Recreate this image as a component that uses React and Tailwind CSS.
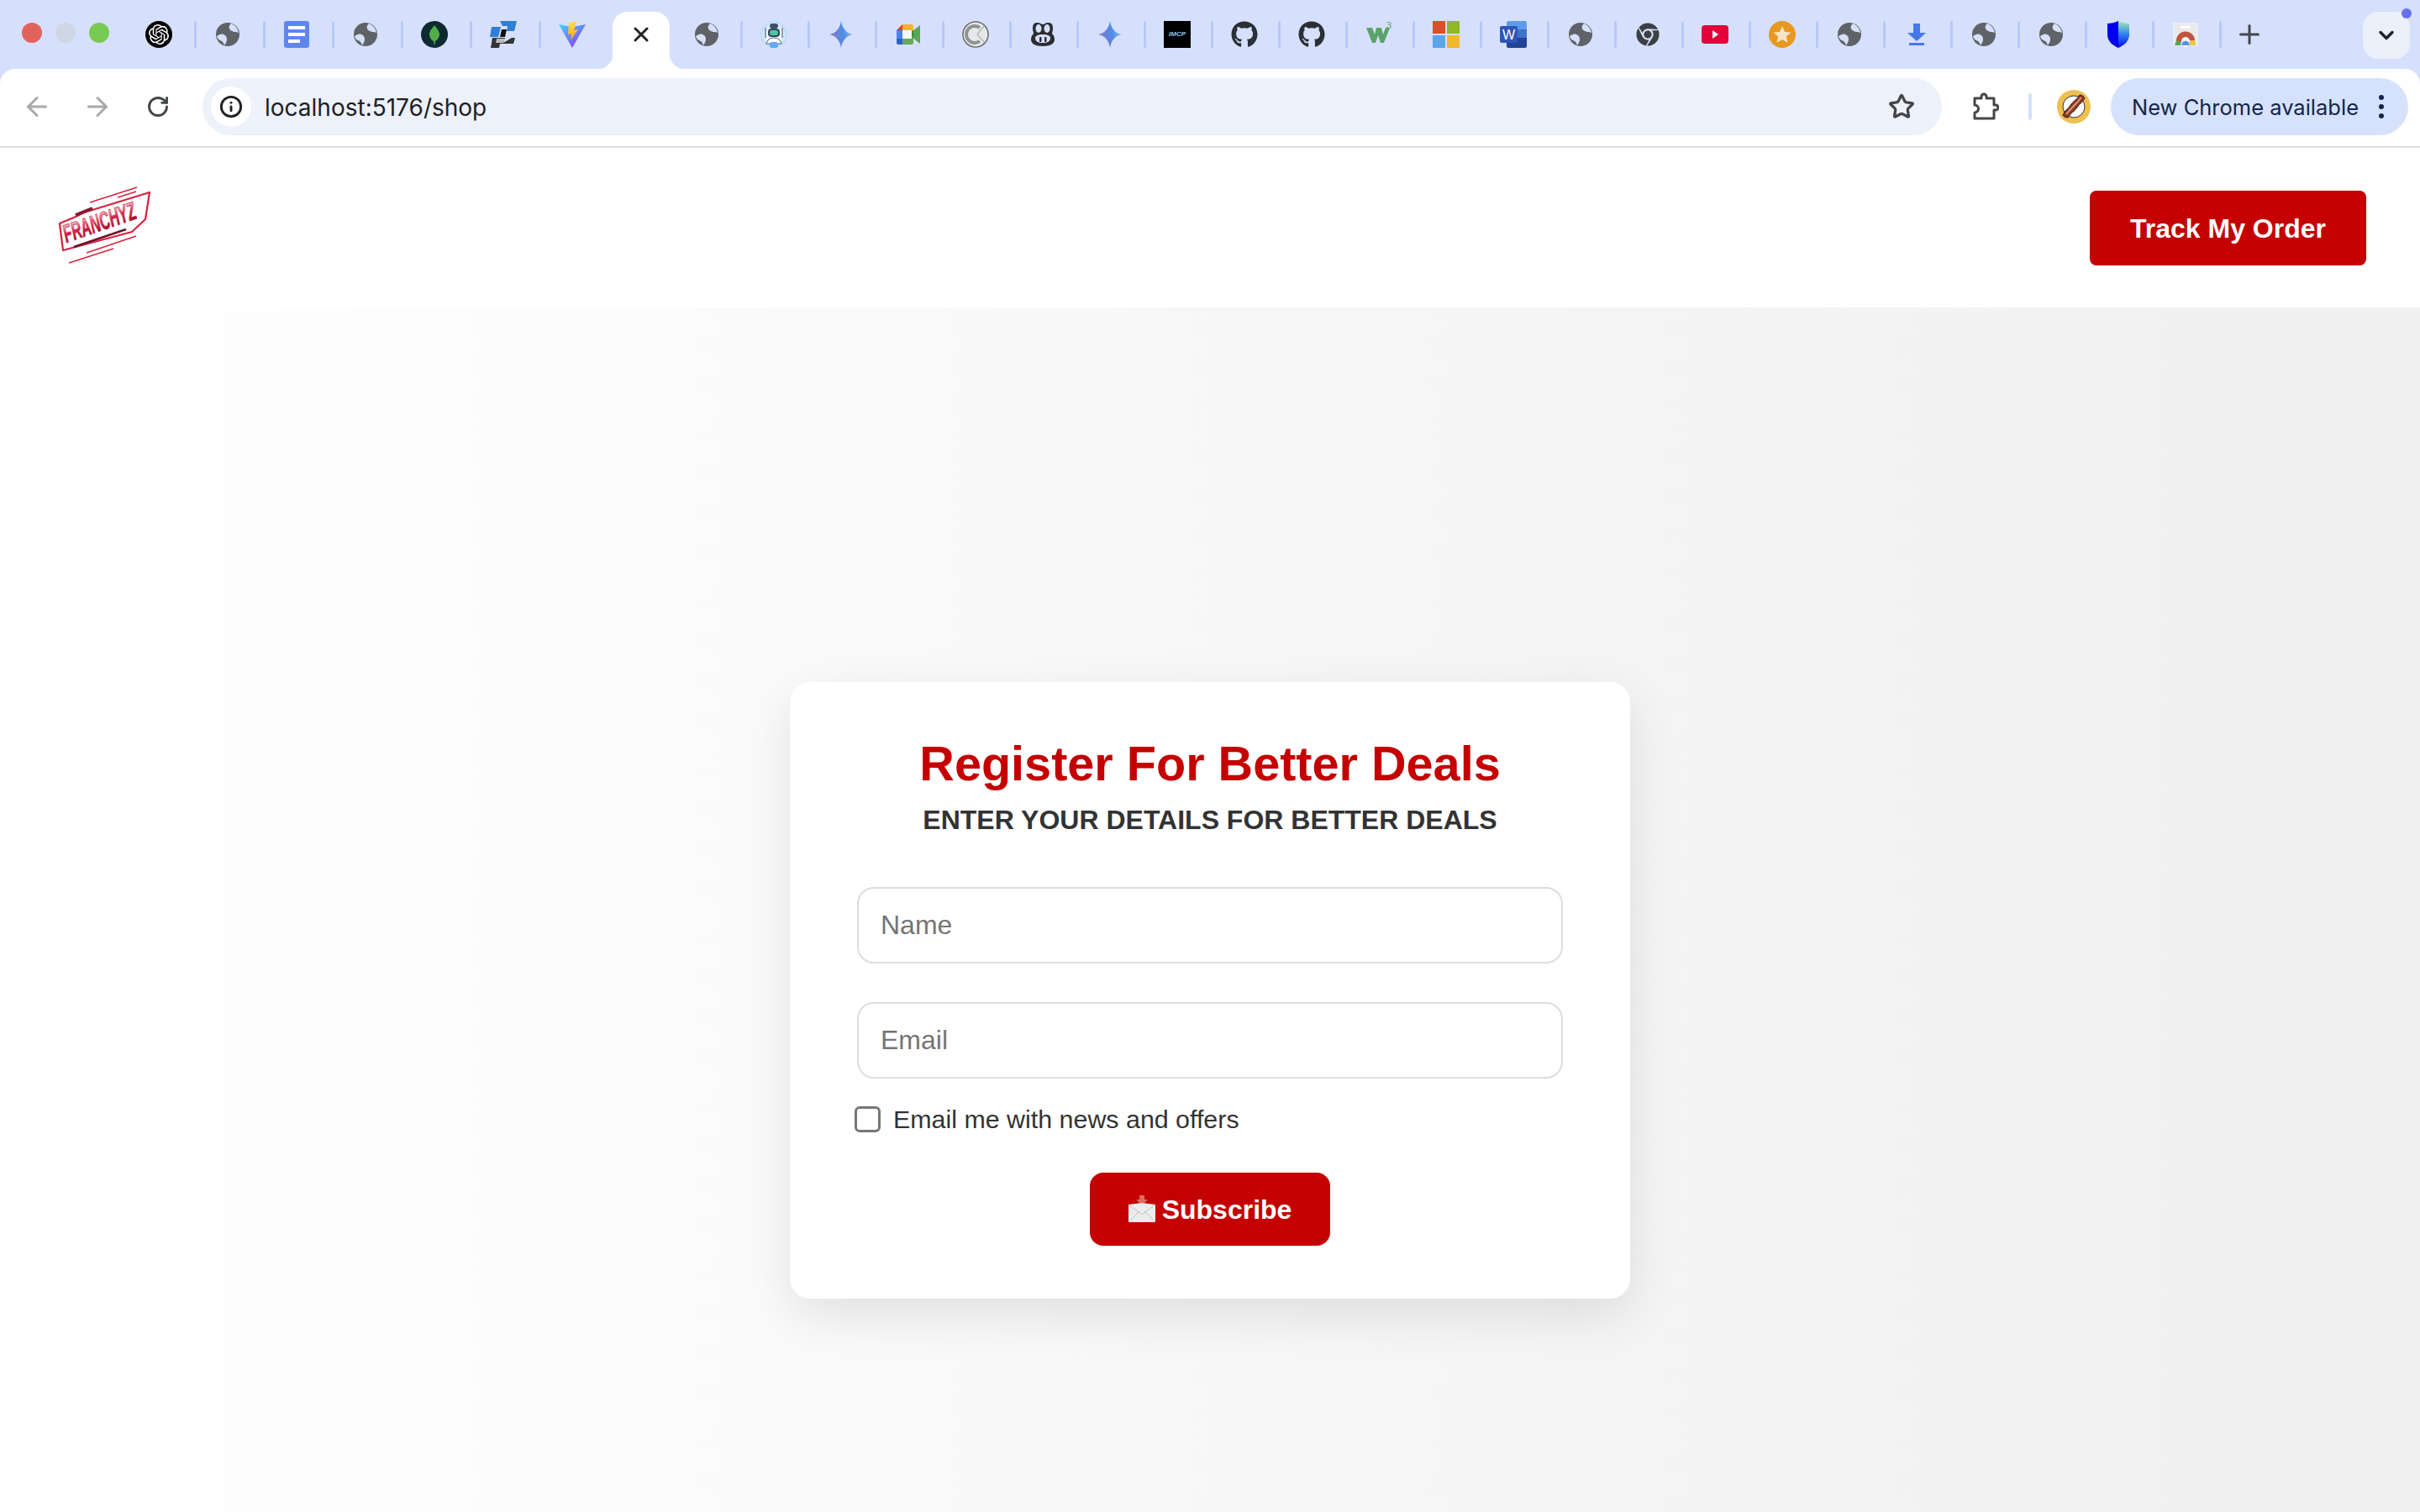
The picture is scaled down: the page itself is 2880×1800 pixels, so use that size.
import React from 'react';
import { FaGithub, FaChrome } from 'react-icons/fa';
import { SiOpenai } from 'react-icons/si';
import { ArrowLeft, ArrowRight, RotateCw, Star, Plus, ChevronDown, X, Info } from 'lucide-react';

// Tab favicons, 32px box each
const Globe = () => (
  <svg viewBox="0 0 32 32" className="w-8 h-8">
    <circle cx="16" cy="16" r="14" fill="#5f6368" />
    <path d="M3 18c3-2 6-3 8-2 3 1 4 3 4 6 0 3-2 5-3 7-1-2-1-4-3-5-2-1-5-2-6-6z" fill="#d6e0fc" />
    <path d="M20 3c-2 2-3 4-2 6 1 3 4 3 6 4 2 0 3 0 5 1-1-5-4-9-9-11z" fill="#d6e0fc" />
  </svg>
);

const Docs = () => (
  <svg viewBox="0 0 32 32" className="w-8 h-8">
    <rect x="1" width="30" height="32" rx="3" fill="#5e86ee" />
    <rect x="6" y="6" width="20" height="4" fill="#fff" />
    <rect x="6" y="14" width="20" height="4" fill="#fff" />
    <rect x="6" y="22" width="14" height="4" fill="#fff" />
  </svg>
);

const Mongo = () => (
  <svg viewBox="0 0 32 32" className="w-8 h-8">
    <circle cx="16" cy="16" r="16" fill="#0e2a30" />
    <path d="M16 5c3 4 6 7 6 11 0 4-3 7-5 8l-.5 4h-1l-.5-4c-2-1-5-4-5-8 0-4 3-7 6-11z" fill="#4fae45" />
  </svg>
);

const BlockLogo = () => (
  <svg viewBox="0 0 32 32" className="w-8 h-8">
    <path d="M12 0h20l-3 12H20l1-6h-6zM2 7h11l-3 12H0z" fill="#2f7fd6" />
    <path d="M14 10h6l-2 9h-6z" fill="#111" />
    <path d="M3 20h15l-2 6 10-6h4l-2 7H12l-1 5H1z" fill="#333" />
    <path d="M8 21h10l-2 5H7z" fill="#bbb" />
  </svg>
);

const Vite = () => (
  <svg viewBox="0 0 32 32" className="w-8 h-8">
    <defs>
      <linearGradient id="viteA" x1="0" y1="0" x2="0.8" y2="1">
        <stop offset="0" stopColor="#41d1ff" />
        <stop offset="1" stopColor="#8c3cf5" />
      </linearGradient>
      <linearGradient id="viteB" x1="0" y1="0" x2="0" y2="1">
        <stop offset="0" stopColor="#ffe14f" />
        <stop offset="1" stopColor="#ffa11e" />
      </linearGradient>
    </defs>
    <path d="M0 4l16 3 16-3-16 28z" fill="url(#viteA)" />
    <path d="M22 0l-10 2-1 14 4-1-1 8 9-13-5 1 4-11z" fill="url(#viteB)" />
  </svg>
);

const Robot = () => (
  <svg viewBox="0 0 32 32" className="w-8 h-8">
    <defs>
      <radialGradient id="robotBg">
        <stop offset="0.5" stopColor="#f2f8fe" />
        <stop offset="1" stopColor="#b9d8f8" />
      </radialGradient>
    </defs>
    <circle cx="16" cy="16" r="16" fill="url(#robotBg)" />
    <rect x="11" y="3" width="10" height="6" rx="3" fill="#3f4f66" />
    <rect x="9" y="9" width="14" height="10" rx="4" fill="#38495e" />
    <rect x="11" y="11" width="10" height="6" rx="3" fill="#49c9a5" />
    <path d="M6 8v12M26 8v12" stroke="#5a6a80" strokeWidth="1.200" />
    <path d="M7 27c1-4 4-7 9-7s8 3 9 7z" fill="#fdfdfd" stroke="#4a5a70" strokeWidth="1" />
    <rect x="11" y="25" width="10" height="7" rx="3" fill="#62a8f2" />
  </svg>
);

const Gemini = ({ id }) => (
  <svg viewBox="0 0 32 32" className="w-8 h-8">
    <defs>
      <linearGradient id={id} x1="0" y1="0.6" x2="1" y2="0.4">
        <stop offset="0" stopColor="#8f6fc4" />
        <stop offset="0.6" stopColor="#4c8fe6" />
        <stop offset="1" stopColor="#8fc2f5" />
      </linearGradient>
    </defs>
    <path d="M16 0c1.2 8.5 6.5 14.8 14 16-7.500 1.200-12.800 7.500-14 16-1.200-8.500-6.500-14.800-14-16C9.500 14.800 14.800 8.500 16 0z" fill={`url(#${id})`} />
  </svg>
);

const Meet = () => (
  <svg viewBox="0 0 32 32" className="w-8 h-8">
    <path d="M21 12l9-7v22l-9-7z" fill="#5aa655" />
    <path d="M2 11l7-7v7z" fill="#d93f33" />
    <path d="M9 4h11c1 0 2 1 2 2v6l-2 2v-3H9z" fill="#f2b824" />
    <path d="M2 11h7v10H2z" fill="#4a82ec" />
    <path d="M2 21h7v7H4c-1 0-2-1-2-2z" fill="#2f62c9" />
    <path d="M9 21h11v-3l2 2v6c0 1-1 2-2 2H9z" fill="#64ab58" />
    <path d="M20 11h1l1 1v8l-2-2z" fill="#3d8a42" />
    <rect x="9" y="11" width="11" height="10" fill="#f4f6fb" />
  </svg>
);

const ClockC = () => (
  <svg viewBox="0 0 32 32" className="w-8 h-8">
    <circle cx="16" cy="16" r="15" fill="#e6e8ea" stroke="#6e6e6e" strokeWidth="1.500" />
    <path d="M21 8a10 10 0 1 0 0 16" fill="none" stroke="#8f9290" strokeWidth="4" />
    <path d="M26 6L18 16l8 9" fill="none" stroke="#b4b6b4" strokeWidth="1.500" />
  </svg>
);

const Copilot = () => (
  <svg viewBox="0 0 32 32" className="w-8 h-8">
    <path d="M9 2c4 0 5 2 7 2s3-2 7-2 5 3 5 7c0 3-1 4-1 6 2 2 3 4 3 7 0 5-5 8-14 8S2 27 2 22c0-3 1-5 3-7 0-2-1-3-1-6 0-4 1-7 5-7z" fill="#2b2d31" />
    <ellipse cx="11" cy="9" rx="3.500" ry="5" fill="#d6e0fc" />
    <ellipse cx="21" cy="9" rx="3.500" ry="5" fill="#d6e0fc" />
    <path d="M7 20c0-2 3-4 9-4s9 2 9 4c0 4-3 6-9 6s-9-2-9-6z" fill="#d6e0fc" />
    <rect x="12" y="19" width="2.500" height="6" rx="1" fill="#2b2d31" />
    <rect x="18" y="19" width="2.500" height="6" rx="1" fill="#2b2d31" />
  </svg>
);

const McpBox = () => (
  <div className="w-8 h-8 bg-black flex items-center justify-center">
    <span className="text-[8px] font-bold italic text-[#8fc5f0] leading-none">IMCP</span>
  </div>
);

const W3 = () => (
  <svg viewBox="0 0 32 32" className="w-8 h-8">
    <path d="M1 8h7l3 8 2-8h6l2 8 3-8h5l-7 18h-4l-3-9-3 9h-4z" fill="#5ba36c" />
    <text x="25" y="9" fontSize="11" fill="#5ba36c" fontFamily="Liberation Sans, sans-serif">3</text>
  </svg>
);

const Microsoft = () => (
  <div className="w-8 h-8 grid grid-cols-2 grid-rows-2 gap-[2px]">
    <div className="bg-[#d84f2a]"></div>
    <div className="bg-[#8fb827]"></div>
    <div className="bg-[#5aa6ee]"></div>
    <div className="bg-[#f0b92b]"></div>
  </div>
);

const Word = () => (
  <svg viewBox="0 0 32 32" className="w-8 h-8">
    <path d="M8 2c0-1 1-2 2-2h20c1 0 2 1 2 2v8H8z" fill="#5e9bec" />
    <rect x="8" y="10" width="24" height="10" fill="#3f73c9" />
    <path d="M8 20h24v10c0 1-1 2-2 2H10c-1 0-2-1-2-2z" fill="#234394" />
    <rect x="0" y="6" width="21" height="20" rx="2" fill="#2f55b5" />
    <text x="10.500" y="22" textAnchor="middle" fontSize="16" fill="#fff" fontFamily="Liberation Sans, sans-serif">W</text>
  </svg>
);

const YouTube = () => (
  <svg viewBox="0 0 32 32" className="w-8 h-8">
    <rect x="0" y="5" width="32" height="22" rx="4" fill="#e4003a" />
    <path d="M13 11l7 5-7 5z" fill="#fff" />
  </svg>
);

const OrangeStar = () => (
  <svg viewBox="0 0 32 32" className="w-8 h-8">
    <circle cx="16" cy="16" r="16" fill="#e8981f" />
    <path d="M16 6l3 7 7.500.6-5.700 4.900 1.800 7.300L16 22l-6.600 3.800 1.800-7.300L5.500 13.600 13 13z" fill="#f6e6c8" />
  </svg>
);

const DownloadArrow = () => (
  <svg viewBox="0 0 32 32" className="w-8 h-8">
    <path d="M12 4h8v11h7L16 25 5 15h7z" fill="#4477e8" transform="translate(0 -1)" />
    <rect x="7" y="26" width="18" height="3" fill="#4477e8" />
  </svg>
);

const Shield = () => (
  <svg viewBox="0 0 32 32" className="w-8 h-8">
    <defs>
      <linearGradient id="shieldFill" x1="0" y1="0" x2="0" y2="1">
        <stop offset="0" stopColor="#9ff0b0" />
        <stop offset="0.5" stopColor="#2f80f0" />
        <stop offset="1" stopColor="#0808f0" />
      </linearGradient>
    </defs>
    <path d="M16 0c-4 2-9 3-13 3v13c0 8 6 13 13 16z" fill="#0000f0" />
    <path d="M16 0c4 2 9 3 13 3v13c0 8-6 13-13 16z" fill="url(#shieldFill)" />
  </svg>
);

const WebStore = () => (
  <svg viewBox="0 0 32 32" className="w-8 h-8">
    <rect x="2" y="3" width="28" height="26" fill="#e9e9e9" stroke="#f6f6f6" />
    <rect x="10" y="6" width="12" height="3" rx="1" fill="#fff" />
    <path d="M5 24a11 11 0 0 1 22-1l-6 0a5 5 0 0 0-10 2z" fill="#c25340" />
    <path d="M27 23a11 11 0 0 1 1 6h-8l1-6z" fill="#eec53e" />
    <path d="M5 23l6 2-1 4H3z" fill="#55a85a" />
    <circle cx="16" cy="26" r="5" fill="#fff" />
    <path d="M11.500 29a4.600 4.600 0 1 1 9 0z" fill="#5a8fe8" />
  </svg>
);

const Tab = ({ children, wide = false }) => (
  <div className="flex items-center flex-none">
    <div className="w-8 h-8 flex items-center justify-center flex-none">{children}</div>
    <div className={wide ? 'ml-[26px] w-[3px] h-8 rounded bg-[#b5c9fa]' : 'ml-[24px] w-[3px] h-8 rounded bg-[#b5c9fa]'}></div>
    <div className="w-[21px]"></div>
  </div>
);

const TabBar = () => (
  <div className="h-[82px] bg-[#d6e0fc] flex items-center relative flex-none">
    <div className="flex items-center gap-4 pl-[26px] pr-[22px] pb-1">
      <div className="w-6 h-6 rounded-full bg-[#e2635c]"></div>
      <div className="w-6 h-6 rounded-full bg-[#cfd6e4]"></div>
      <div className="w-6 h-6 rounded-full bg-[#77cb52]"></div>
    </div>
    <div className="flex items-center ml-[21px]">
      <Tab wide><div className="w-8 h-8 rounded-full bg-black flex items-center justify-center"><SiOpenai className="w-6 h-6 text-white" /></div></Tab>
      <Tab wide><Globe /></Tab>
      <Tab wide><Docs /></Tab>
      <Tab wide><Globe /></Tab>
      <Tab wide><Mongo /></Tab>
      <Tab wide><BlockLogo /></Tab>
      <div className="w-8 h-8 flex-none"><Vite /></div>
      {/* active tab, flared into the toolbar below */}
      <div className="relative ml-[32px] mr-[28px] w-[68px] h-[68px] mt-[14px] bg-white rounded-t-[18px] flex items-center justify-center flex-none">
        <X className="w-7 h-7 text-[#202124] mb-[14px]" strokeWidth={2.500} />
        <div className="absolute left-[-18px] bottom-0 w-[18px] h-[18px] bg-[radial-gradient(circle_at_0_0,#d6e0fc_18px,#ffffff_18.500px)]"></div>
        <div className="absolute right-[-18px] bottom-0 w-[18px] h-[18px] bg-[radial-gradient(circle_at_100%_0,#d6e0fc_18px,#ffffff_18.500px)]"></div>
      </div>
      <Tab><Globe /></Tab>
      <Tab><Robot /></Tab>
      <Tab><Gemini id="gemA" /></Tab>
      <Tab><Meet /></Tab>
      <Tab><ClockC /></Tab>
      <Tab><Copilot /></Tab>
      <Tab><Gemini id="gemB" /></Tab>
      <Tab><McpBox /></Tab>
      <Tab><FaGithub className="w-8 h-8 text-[#2b2f36]" /></Tab>
      <Tab><FaGithub className="w-8 h-8 text-[#2b2f36]" /></Tab>
      <Tab><W3 /></Tab>
      <Tab><Microsoft /></Tab>
      <Tab><Word /></Tab>
      <Tab><Globe /></Tab>
      <Tab><FaChrome className="w-7 h-7 text-[#3c4043]" /></Tab>
      <Tab><YouTube /></Tab>
      <Tab><OrangeStar /></Tab>
      <Tab><Globe /></Tab>
      <Tab><DownloadArrow /></Tab>
      <Tab><Globe /></Tab>
      <Tab><Globe /></Tab>
      <Tab><Shield /></Tab>
      <Tab><WebStore /></Tab>
      <Plus className="w-9 h-9 -ml-[6px] text-[#44474e] flex-none" strokeWidth={2} />
    </div>
    <div className="absolute right-3 top-[14px] w-14 h-14 rounded-[18px] bg-[#ebf0fb] flex items-center justify-center">
      <ChevronDown className="w-7 h-7 text-[#202124]" strokeWidth={3} />
      <div className="absolute right-[-2px] top-[-4px] w-3 h-3 rounded-full bg-[#6470ee]"></div>
    </div>
  </div>
);

const Toolbar = () => (
  <div className="h-[94px] flex-none bg-[#d6e0fc]">
    <div className="h-full bg-white rounded-t-[18px] border-b-2 border-[#dfdfdf] flex items-center pl-[26px] pb-[2px] font-['Inter',sans-serif]">
      <ArrowLeft className="w-9 h-9 text-[#a9a9a9] flex-none" strokeWidth={2} />
      <ArrowRight className="w-9 h-9 text-[#a9a9a9] flex-none ml-9" strokeWidth={2} />
      <RotateCw className="w-7 h-7 text-[#444746] flex-none ml-10" strokeWidth={2.500} />
      <div className="ml-[39px] w-[2070px] h-[68px] flex-none rounded-full bg-[#edf1fa] flex items-center pl-[10px] pr-[32px]">
        <div className="w-12 h-12 rounded-full bg-white flex items-center justify-center flex-none">
          <Info className="w-7 h-7 text-[#202124]" strokeWidth={2.500} />
        </div>
        <span className="ml-4 text-[28px] text-[#202124] leading-none mt-[2px]">localhost:5176/shop</span>
        <Star className="w-8 h-8 text-[#444746] ml-auto" strokeWidth={2.500} />
      </div>
      {/* extensions puzzle piece */}
      <svg viewBox="0 0 32 34" className="w-8 h-[34px] flex-none ml-[36px]" fill="none" stroke="#444746" strokeWidth="3" strokeLinejoin="round">
        <path d="M3 7h8V5a3 3 0 0 1 6 0v2h9v8h2a3 3 0 0 1 0 6h-2v10H3v-7a4 4 0 0 0 0-9z" />
      </svg>
      <div className="w-1 h-8 rounded bg-[#d6e0fc] flex-none ml-[35px]"></div>
      <svg viewBox="0 0 40 40" className="w-10 h-10 flex-none ml-[30px]">
        <circle cx="20" cy="20" r="20" fill="#eec04f" />
        <circle cx="20" cy="20" r="13" fill="#fff" stroke="#333" strokeWidth="1" />
        <path d="M27 6c3 0 5 2 6 4-2 2-2 4-5 6s-3 4-5 6-3 4-5 5-3 4-5 6c-3 0-5-1-6-3 2-3 2-5 5-7s3-4 5-6 3-4 5-5 3-4 5-6z" fill="#8f3a26" stroke="#2a1510" strokeWidth="1" />
        <path d="M29 9c-3 4-5 6-8 9s-6 6-10 11" fill="none" stroke="#d99a7a" strokeWidth="2" />
      </svg>
      <div className="ml-[24px] w-[354px] h-[68px] flex-none rounded-full bg-[#d6e2fb] flex items-center pl-[25px] text-[#15254d]">
        <span className="text-[25.500px] leading-none whitespace-nowrap mt-[2px]">New Chrome available</span>
        <div className="ml-[24px] flex flex-col gap-[5px]">
          <div className="w-[6px] h-[6px] rounded-full bg-[#15254d]"></div>
          <div className="w-[6px] h-[6px] rounded-full bg-[#15254d]"></div>
          <div className="w-[6px] h-[6px] rounded-full bg-[#15254d]"></div>
        </div>
      </div>
    </div>
  </div>
);

// the Franchyz wordmark: slanted badge in red
const Logo = () => (
  <svg viewBox="0 0 110 92" className="w-[110px] h-[92px] mb-1 overflow-visible">
    <defs>
      <linearGradient id="logoText" x1="0" y1="0" x2="0" y2="1">
        <stop offset="0.1" stopColor="#fbe3e8" />
        <stop offset="0.5" stopColor="#d8284c" />
        <stop offset="1" stopColor="#7c0c22" />
      </linearGradient>
    </defs>
    <path d="M1 43L20 35 30 30 108 6 103 38 87 53 5 75z" fill="#fff" stroke="#d8213f" strokeWidth="2.200" strokeLinejoin="round" />
    <path d="M20 33L40 25" stroke="#8c1830" strokeWidth="4" />
    <path d="M37 18L93 0M70 12L92 5M33 78L92 58M12 90L65 73" stroke="#d8213f" strokeWidth="1.400" />
    <path d="M18 71L80 50" stroke="#6c1226" strokeWidth="2.500" />
    <text transform="translate(9 66) rotate(-19)" fontSize="30" fontWeight="700" fontStyle="italic" fill="url(#logoText)" stroke="#c8173a" strokeWidth="0.700" fontFamily="Liberation Sans, sans-serif" textLength="90" lengthAdjust="spacingAndGlyphs">FRANCHYZ</text>
  </svg>
);

const Header = () => (
  <div className="h-[190px] bg-white flex-none flex items-center justify-between pl-[70px] pr-[64px]">
    <Logo />
    <button className="w-[329px] h-[89px] bg-[#c40000] rounded-lg text-white font-bold text-[32px] mt-[1px]">Track My Order</button>
  </div>
);

const SubscribeForm = () => (
  <div className="w-[1000px] h-[734px] bg-white rounded-3xl shadow-[0_20px_60px_rgba(0,0,0,0.1)] px-20 pt-[62px]">
    <h1 className="text-center text-[57.600px] font-bold leading-[70px] text-[#c40000]">Register For Better Deals</h1>
    <h2 className="text-center text-[32px] font-bold leading-[40px] text-[#333] mt-[12px]">ENTER YOUR DETAILS FOR BETTER DEALS</h2>
    <form className="mt-[60px]">
      <input placeholder="Name" className="block w-full h-[91px] border-2 border-[#ddd] rounded-[20px] px-[26px] text-[32px] outline-none placeholder:text-[#757575]" />
      <input placeholder="Email" className="block w-full h-[91px] mt-[46px] border-2 border-[#ddd] rounded-[20px] px-[26px] text-[32px] outline-none placeholder:text-[#757575]" />
      <label className="flex items-center mt-[33px] -ml-[3px] text-[30.400px] leading-none text-[#333]">
        <span className="w-[31px] h-[31px] border-[3px] border-[#767676] rounded-md bg-white flex-none"></span>
        <span className="ml-[15px]">Email me with news and offers</span>
      </label>
      <button type="button" className="mx-auto mt-[48px] w-[286px] h-[87px] bg-[#c40000] rounded-[16px] text-white font-bold text-[32px] flex items-center justify-center">
        <svg viewBox="0 0 32 32" className="w-8 h-8 mr-[8px] mb-[2px]">
          <path d="M13 0h6v5h4l-7 7-7-7h4z" fill="#e26a60" />
          <path d="M0 11l16-2 16 2v21H0z" fill="#ececec" />
          <path d="M0 11l16 12 16-12M0 32l13-13M32 32L19 19" fill="none" stroke="#c4c4c4" strokeWidth="1" />
        </svg>
        Subscribe
      </button>
    </form>
  </div>
);

export default function App() {
  return (
    <div className="w-[2880px] h-[1800px] overflow-hidden flex flex-col font-['Liberation_Sans',sans-serif]">
      <TabBar />
      <Toolbar />
      <Header />
      <main className="flex-1 flex justify-center pt-[446px] bg-[linear-gradient(90deg,#ffffff_3%,#f0f0f0_95%)]">
        <SubscribeForm />
      </main>
    </div>
  );
}
